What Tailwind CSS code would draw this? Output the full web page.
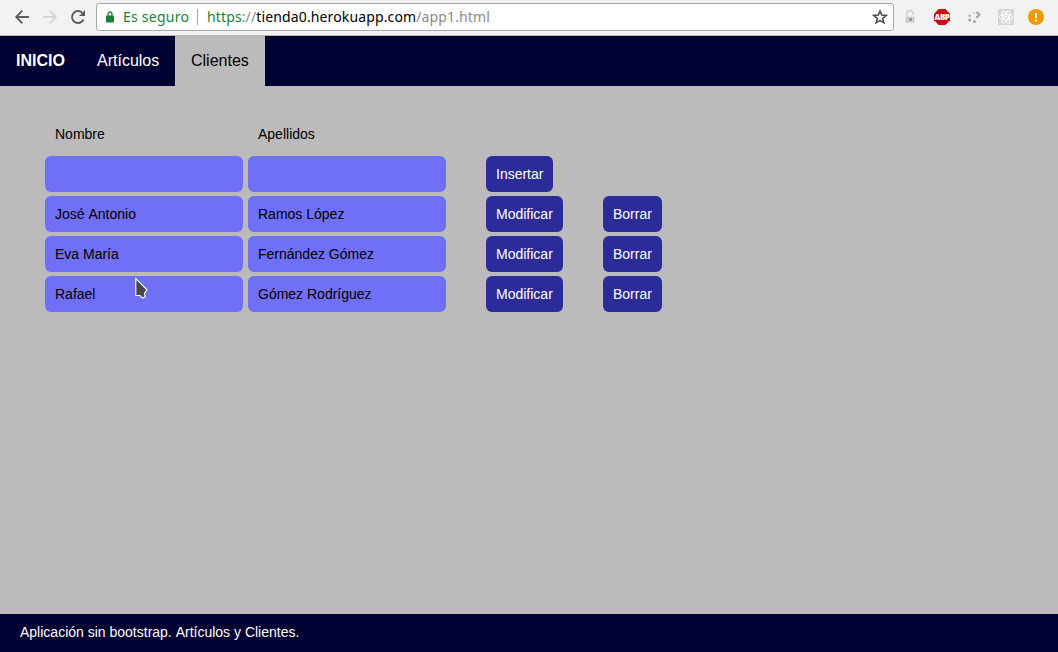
<!DOCTYPE html>
<html lang="es">
<head>
<meta charset="utf-8">
<title>Clientes</title>
<script src="https://cdn.jsdelivr.net/npm/@tailwindcss/browser@4"></script>
</head>
<body class="h-[652px] w-[1058px] overflow-hidden flex flex-col bg-[#bbbbbb] font-['Liberation_Sans',sans-serif] text-black">
  <div class="h-9 shrink-0 flex items-start bg-[#f2f2f2] border-b border-[#b6b6b6] pl-3 pt-[3px]">
    <div class="flex h-7 items-center gap-2 mr-2">
      <svg class="size-5" viewBox="0 0 20 20" fill="none" stroke="#5a5c60" stroke-width="1.800"><path d="M17 10H4.500M10.300 3.700L4.200 10l6.100 6.300"/></svg>
      <svg class="size-5" viewBox="0 0 20 20" fill="none" stroke="#d4d4d4" stroke-width="1.800"><path d="M3 10h12.500M9.700 3.700L15.800 10l-6.100 6.300"/></svg>
      <svg class="size-5" viewBox="0 0 20 20"><path d="M15.500 12.500A6 6 0 1 1 14.300 5.800" fill="none" stroke="#5a5c60" stroke-width="1.900"/><path d="M17 3v6h-6z" fill="#5a5c60"/></svg>
    </div>
    <div class="h-7 w-[798px] flex items-center rounded-[3px] border border-[#a9a9a9] bg-white pl-[9px] pr-[5px] font-['Noto_Sans',sans-serif] text-[14px] leading-[26px]">
      <svg class="h-3 w-2 mr-[9px]" viewBox="0 0 8 12"><path d="M2 5.500V3a2 2 0 0 1 4 0v2.500" fill="none" stroke="#188038" stroke-width="1.300"/><rect y="4.500" width="8" height="7" rx="1" fill="#188038"/></svg>
      <span class="w-[66px] whitespace-nowrap tracking-[0.24px] text-[#188038]">Es seguro</span>
      <span class="ml-2 mr-[9px] h-4 w-px bg-[#aaaaaa]"></span>
      <span class="grow whitespace-nowrap tracking-[0.13px] text-[#8a8a8a]"><span class="text-[#188038]">https</span>://<span class="text-black">tienda0.herokuapp.com</span>/app1.html</span>
      <svg class="size-4" viewBox="0 0 16 16"><path d="M8 1.900l1.700 4.200 4.500.35-3.450 2.900 1.100 4.450L8 11.400l-3.850 2.400 1.100-4.450-3.450-2.900 4.500-.35z" fill="none" stroke="#4a4a4a" stroke-width="1.500"/></svg>
    </div>
    <div class="ml-2 flex h-7 items-center gap-4">
      <svg class="size-4" viewBox="0 0 16 16"><path d="M5 7V4.500a3 3 0 0 1 6 0V6" fill="none" stroke="#c4c4c4" stroke-width="1.500" stroke-dasharray="1.500 .5"/><rect x="3.500" y="7.500" width="9" height="6.500" rx="1" fill="#d4d4d4"/><path d="M7 9h3v3H7z" fill="#929292"/><path d="M5 8v5M11.500 8v5" stroke="#bdbdbd"/></svg>
      <div class="relative size-4">
        <svg class="size-4" viewBox="0 0 16 16"><path d="M4.700 0h6.600L16 4.700v6.600L11.300 16H4.700L0 11.300V4.700z" fill="#c70d0d"/></svg>
        <span class="absolute -left-1 top-0 w-6 text-center font-['Open_Sans',sans-serif] text-[8px] leading-4 font-extrabold tracking-[-0.5px] text-white">ABP</span>
      </div>
      <svg class="size-4" viewBox="0 0 16 16" fill="#a5a5a5"><circle cx="3.600" cy="6.700" r="1.300" fill="#b5b5b5"/><circle cx="8.500" cy="12.500" r="1.500"/><circle cx="3.800" cy="11" r="1.600"/><circle cx="8" cy="4" r="1.100" fill="#c4c4c4"/><path d="M10.300 2.800l3.200 3-3.200 3" fill="none" stroke="#a5a5a5" stroke-width="2"/></svg>
      <svg class="size-4" viewBox="0 0 16 16"><path d="M0 0h16v16H0z" fill="#d6d6d6"/><g fill="none" stroke="#fff" stroke-width=".9"><ellipse cx="8" cy="8" rx="6.800" ry="2.700"/><ellipse cx="8" cy="8" rx="6.800" ry="2.700" transform="rotate(60 8 8)"/><ellipse cx="8" cy="8" rx="6.800" ry="2.700" transform="rotate(120 8 8)"/></g><circle cx="8" cy="8" r="1.400" fill="#fff"/></svg>
      <svg class="size-4 -ml-[2px]" viewBox="0 0 16 16"><circle cx="8" cy="8" r="8" fill="#f29900"/><path d="M7 4h2v5H7zM7 10.500h2v2H7z" fill="#fff"/></svg>
    </div>
  </div>

  <nav class="flex h-[50px] shrink-0 bg-[#000033] text-base leading-[50px] text-white">
    <a class="w-[81px] pl-4 font-bold">INICIO</a>
    <a class="w-[94px] pl-4">Artículos</a>
    <a class="w-[90px] bg-[#bbbbbb] pl-4 text-black">Clientes</a>
  </nav>

  <main class="grow pl-[45px] pt-[30px] text-sm leading-9">
    <div class="flex h-10 gap-[5px]"><div class="w-[198px] px-2.5">Nombre</div><div class="w-[198px] px-2.5">Apellidos</div></div>
    <div class="flex flex-col gap-1">
      <div class="flex h-9 gap-[5px]">
        <div class="w-[198px] rounded-md bg-[#7070f7] px-2.5"></div><div class="w-[198px] rounded-md bg-[#7070f7] px-2.5"></div>
        <div class="ml-[35px] w-[67px] rounded-md bg-[#2b2b99] pl-2.5 text-white">Insertar</div>
      </div>
      <div class="flex h-9 gap-[5px]">
        <div class="w-[198px] rounded-md bg-[#7070f7] px-2.5 [font-kerning:none]">José Antonio</div><div class="w-[198px] rounded-md bg-[#7070f7] px-2.5">Ramos López</div>
        <div class="ml-[35px] w-[77px] rounded-md bg-[#2b2b99] pl-2.5 text-white">Modificar</div><div class="ml-[35px] w-[59px] rounded-md bg-[#2b2b99] pl-2.5 text-white">Borrar</div>
      </div>
      <div class="flex h-9 gap-[5px]">
        <div class="w-[198px] rounded-md bg-[#7070f7] px-2.5">Eva María</div><div class="w-[198px] rounded-md bg-[#7070f7] px-2.5">Fernández Gómez</div>
        <div class="ml-[35px] w-[77px] rounded-md bg-[#2b2b99] pl-2.5 text-white">Modificar</div><div class="ml-[35px] w-[59px] rounded-md bg-[#2b2b99] pl-2.5 text-white">Borrar</div>
      </div>
      <div class="flex h-9 gap-[5px]">
        <div class="w-[198px] rounded-md bg-[#7070f7] px-2.5">Rafael</div><div class="w-[198px] rounded-md bg-[#7070f7] px-2.5">Gómez Rodríguez</div>
        <div class="ml-[35px] w-[77px] rounded-md bg-[#2b2b99] pl-2.5 text-white">Modificar</div><div class="ml-[35px] w-[59px] rounded-md bg-[#2b2b99] pl-2.5 text-white">Borrar</div>
      </div>
    </div>
  </main>

  <footer class="h-[38px] shrink-0 bg-[#000033] pl-5 text-sm leading-9 text-white [font-kerning:none]">Aplicación sin bootstrap. Artículos y Clientes.</footer>

  <svg class="absolute left-[134px] top-[276px] h-6 w-4" viewBox="0 0 16 24"><path d="M1.800 2.500v17h4.200l2.300 2.500 2.800-1.200-.6-3.300 2.500-3.600z" fill="#484848" stroke="#fff" stroke-width="1.100"/></svg>
</body>
</html>
